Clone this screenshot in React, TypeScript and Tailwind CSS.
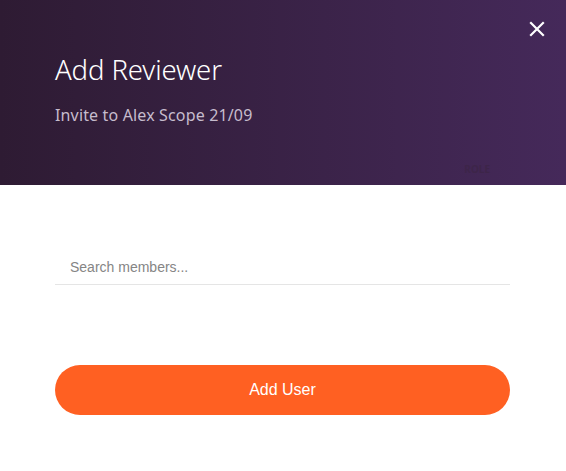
import React from "react";

export default function App() {
  return (
    <div className="w-[566px] h-[471px] bg-white overflow-hidden">
      <div className="relative h-[185px] bg-gradient-to-r from-[#2e1b33] to-[#45295a] pl-[55px] pr-[20px] pt-[52px] flex flex-col" style={{ fontFamily: '"Noto Sans", "Open Sans", sans-serif' }}>
        <button className="absolute right-[21px] top-[21px] w-[16px] h-[16px] flex items-center justify-center" aria-label="Close">
          <svg width="16" height="16" viewBox="0 0 16 16">
            <path d="M2 2 L14 14 M14 2 L2 14" stroke="#ffffff" strokeWidth="2.2" strokeLinecap="square" />
          </svg>
        </button>
        <h1 className="text-[27.5px] leading-[36px] font-light text-white tracking-[-0.1px]">Add Reviewer</h1>
        <p className="mt-[16px] text-[16px] leading-[22px] font-normal tracking-[0.15px] text-[#c6bccd]">Invite to Alex Scope 21/09</p>
        <div className="mt-auto mb-[8px] self-end mr-[56px] text-[10px] font-bold text-[#3d2549]">ROLE</div>
      </div>
      <div className="pl-[55px] pr-[56px] pt-[65px]" style={{ fontFamily: '"Liberation Sans", Arial, sans-serif' }}>
        <div className="border-b border-[#e5e5e5] h-[35px] flex items-center pl-[15px]">
          <input
            autoFocus
            className="w-full outline-none text-[14px] text-[#333] placeholder:text-[#858585] bg-transparent"
            placeholder="Search members..."
          />
        </div>
        <button className="mt-[80px] w-full h-[50px] rounded-full bg-[#ff6022] text-white text-[16px]">Add User</button>
      </div>
    </div>
  );
}
